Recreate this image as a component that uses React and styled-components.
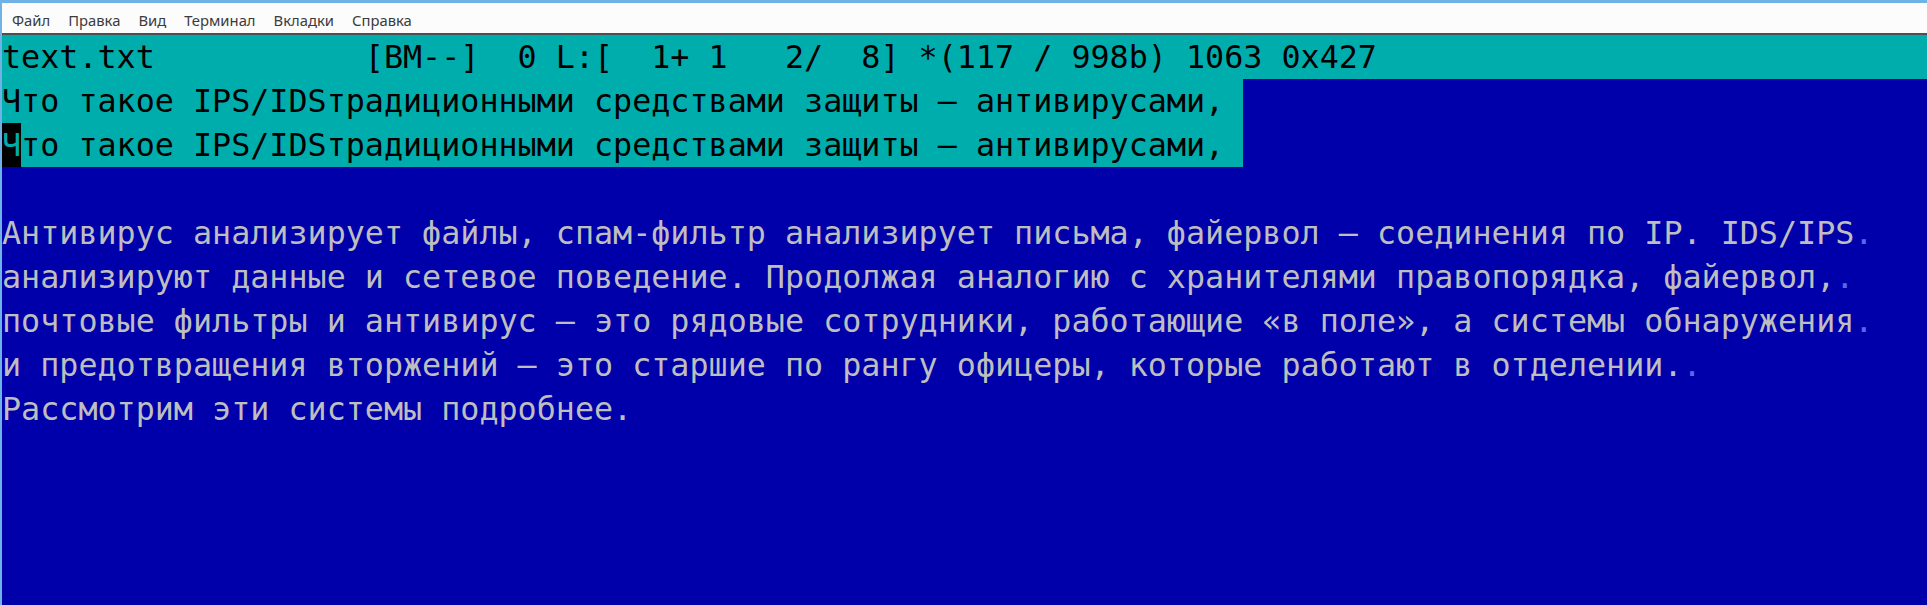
import styled, { createGlobalStyle } from "styled-components";

// mc editor colours
const CYAN = "#00adad";
const BLUE = "#0000ab";
const GREY = "#bebebe";

const GlobalStyle = createGlobalStyle`
  html, body {
    margin: 0;
    padding: 0;
    height: 100%;
    overflow: hidden;
    background: ${BLUE};
  }
  #root {
    height: 100%;
  }
`;

const menuItems = ["Файл", "Правка", "Вид", "Терминал", "Вкладки", "Справка"];

const bodyLines = [
  { text: "Антивирус анализирует файлы, спам-фильтр анализирует письма, файервол — соединения по IP. IDS/IPS", tail: "." },
  { text: "анализируют данные и сетевое поведение. Продолжая аналогию с хранителями правопорядка, файервол,", tail: "." },
  { text: "почтовые фильтры и антивирус — это рядовые сотрудники, работающие «в поле», а системы обнаружения", tail: "." },
  { text: "и предотвращения вторжений — это старшие по рангу офицеры, которые работают в отделении.", tail: "." },
  { text: "Рассмотрим эти системы подробнее.", tail: "" },
];

const STATUS =
  "text.txt           [BM--]  0 L:[  1+ 1   2/  8] *(117 / 998b) 1063 0x427";

const SELECTED = "Что такое IPS/IDSтрадиционными средствами защиты — антивирусами, ";

export default function App() {
  return (
    <>
      <GlobalStyle />
      <Window>
        <MenuBar>
          {menuItems.map((item) => (
            <MenuItem key={item}>{item}</MenuItem>
          ))}
        </MenuBar>
        <Screen>
          <StatusLine>{STATUS}</StatusLine>
          <Line>
            <Selection>{SELECTED}</Selection>
          </Line>
          <Line>
            <Selection>
              <Cursor>{SELECTED[0]}</Cursor>
              {SELECTED.slice(1)}
            </Selection>
          </Line>
          <Line />
          {bodyLines.map((line, i) => (
            <Line key={i}>
              {line.text}
              <Marker>{line.tail}</Marker>
            </Line>
          ))}
        </Screen>
      </Window>
    </>
  );
}

const Window = styled.div`
  display: flex;
  flex-direction: column;
  height: 100%;
  box-sizing: border-box;
  border-top: 3px solid #6fb3e6;
  border-left: 2px solid #6fb3e6;
`;

const MenuBar = styled.nav`
  display: flex;
  align-items: center;
  gap: 18px;
  height: 30px;
  padding: 0 10px;
  background: #fcfcfc;
  border-bottom: 2px solid #4d4f52;
`;

const MenuItem = styled.span`
  font-family: "Noto Sans", "Open Sans", sans-serif;
  font-size: 14.8px;
  color: #3b3b3b;
  padding-top: 3px;
`;

const Screen = styled.main`
  flex: 1;
  background: ${BLUE};
  color: ${GREY};
  font-family: "DejaVu Sans Mono", monospace;
  font-size: 31.72px;
  line-height: 44px;
  white-space: pre;
  overflow: hidden;
`;

const Line = styled.div`
  height: 44px;
`;

const StatusLine = styled(Line)`
  background: ${CYAN};
  color: #000;
`;

const Selection = styled.span`
  display: inline-block;
  height: 44px;
  background: ${CYAN};
  color: #000;
`;

const Cursor = styled.span`
  display: inline-block;
  height: 44px;
  background: #000;
  color: ${CYAN};
`;

const Marker = styled.span`
  color: #5a66ee;
`;
